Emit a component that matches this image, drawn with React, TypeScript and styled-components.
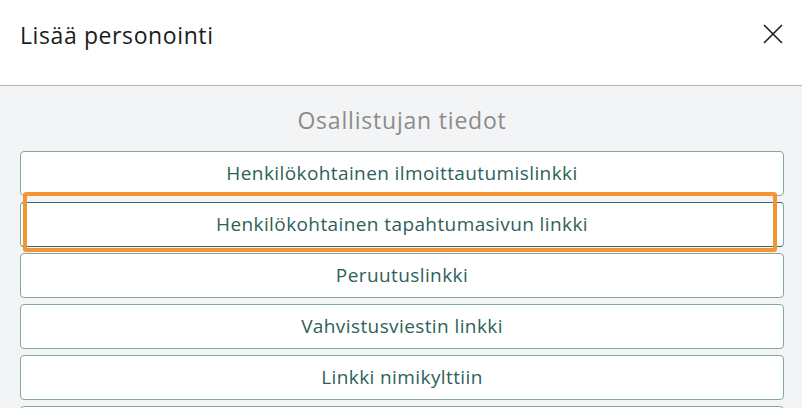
import React from "react";
import styled, { createGlobalStyle } from "styled-components";

const GlobalStyle = createGlobalStyle`
  html, body {
    margin: 0;
    padding: 0;
    background: #f3f4f6;
  }
  body {
    font-family: "Open Sans", Lato, sans-serif;
  }
`;

const Dialog = styled.div`
  width: 802px;
  height: 408px;
  overflow: hidden;
  display: flex;
  flex-direction: column;
  background: #f3f4f6;
`;

const Header = styled.div`
  height: 86px;
  flex-shrink: 0;
  box-sizing: border-box;
  display: flex;
  align-items: center;
  justify-content: space-between;
  padding: 0 17px 0 20px;
  background: #ffffff;
  border-bottom: 1px solid #b5b5b5;
`;

const Title = styled.h2`
  margin: 0 0 16px 0;
  font-size: 23px;
  font-weight: 400;
  color: #1c1c1c;
  letter-spacing: 0.6px;
`;

const CloseButton = styled.button`
  width: 24px;
  height: 24px;
  padding: 0;
  margin-bottom: 18px;
  border: none;
  background: transparent;
  display: flex;
  align-items: center;
  justify-content: center;
  cursor: pointer;
`;

const Body = styled.div`
  position: relative;
  padding: 19px 18px 0 20px;
  display: flex;
  flex-direction: column;
`;

const SectionTitle = styled.div`
  text-align: center;
  font-size: 23px;
  color: #8c8c8c;
  line-height: 30px;
  margin-bottom: 16px;
  letter-spacing: 0.8px;
`;

const List = styled.div`
  display: flex;
  flex-direction: column;
  gap: 6px;
`;

const Option = styled.button<{ $active?: boolean }>`
  height: 45px;
  box-sizing: border-box;
  width: 100%;
  padding: 0 0 1px 0;
  background: #ffffff;
  border: 1.5px solid #86a6a3;
  border-top-color: ${(p) => (p.$active ? "#3c6b66" : "#86a6a3")};
  border-bottom-color: ${(p) => (p.$active ? "#3c6b66" : "#86a6a3")};
  border-radius: 4px;
  font-family: inherit;
  font-size: 19px;
  color: #2f5f5a;
  letter-spacing: 0.4px;
  cursor: pointer;
`;

const Highlight = styled.div`
  position: absolute;
  left: 23px;
  top: 106px;
  width: 754px;
  height: 60px;
  box-sizing: border-box;
  border: 4px solid #f39533;
  border-radius: 3px;
  pointer-events: none;
`;

const options = [
  "Henkilökohtainen ilmoittautumislinkki",
  "Henkilökohtainen tapahtumasivun linkki",
  "Peruutuslinkki",
  "Vahvistusviestin linkki",
  "Linkki nimikylttiin",
  "Kalenterilinkki",
];

export default function App() {
  return (
    <Dialog>
      <GlobalStyle />
      <Header>
        <Title>Lisää personointi</Title>
        <CloseButton aria-label="Sulje">
          <svg width="22" height="22" viewBox="0 0 22 22">
            <path
              d="M2 2L20 20M20 2L2 20"
              stroke="#1c1c1c"
              strokeWidth="1.6"
              fill="none"
            />
          </svg>
        </CloseButton>
      </Header>
      <Body>
        <SectionTitle>Osallistujan tiedot</SectionTitle>
        <List>
          {options.map((o, i) => (
            <Option key={o} $active={i === 1}>
              {o}
            </Option>
          ))}
        </List>
        <Highlight />
      </Body>
    </Dialog>
  );
}
